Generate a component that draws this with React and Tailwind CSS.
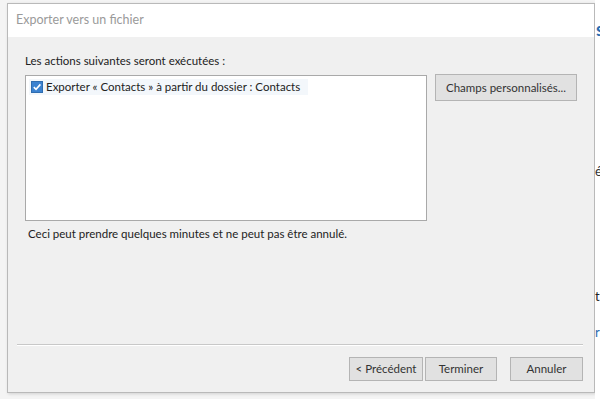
import React from "react";

function Btn({ children, className = "" }) {
  return (
    <div
      className={
        "flex items-center justify-center border border-[#b4b4b4] bg-[#e1e1e1] text-[11.5px] text-[#333] " +
        className
      }
    >
      {children}
    </div>
  );
}

export default function App() {
  return (
    <div
      className="relative flex h-[399px] w-[600px] overflow-hidden bg-[#f4f4f4]"
      style={{ fontFamily: 'Lato, "Noto Sans", sans-serif' }}
    >
      <div className="ml-[7px] mt-[3px] flex h-[390px] w-[588px] flex-col border border-[#b9b9b9] bg-[#f0f0f0] shadow-[1px_1px_3px_rgba(0,0,0,0.15)]">
        <div className="flex h-[33px] items-center bg-white pl-[8px] text-[12.5px] text-[#9a9a9a]">
          Exporter vers un fichier
        </div>
        <div className="flex flex-1 flex-col pl-[17px] pr-[11px] pt-[16px]">
          <div className="text-[11.5px] leading-[16px] text-[#222]">
            Les actions suivantes seront exécutées :
          </div>
          <div className="mt-[6px] flex gap-[8px]">
            <div className="h-[146px] w-[402px] border border-[#a9a9a9] bg-white p-[3px]">
              <div className="flex h-[16px] w-[279px] items-center bg-[#f3f7fb] pl-[2px]">
                <div className="flex h-[12px] w-[12px] shrink-0 items-center justify-center border border-[#2f6db0] bg-[#3b82d0]">
                  <svg width="10" height="10" viewBox="0 0 10 10">
                    <path d="M1.8 5.2 L4 7.3 L8.4 2.4" fill="none" stroke="white" strokeWidth="1.6" />
                  </svg>
                </div>
                <span className="ml-[3px] whitespace-nowrap text-[11.5px] leading-[16px] text-[#222]">
                  Exporter « Contacts » à partir du dossier : Contacts
                </span>
              </div>
            </div>
            <Btn className="mt-[-1px] h-[27px] w-[142px]">Champs personnalisés...</Btn>
          </div>
          <div className="mt-[5px] pl-[3px] text-[11.5px] leading-[16px] text-[#222]">
            Ceci peut prendre quelques minutes et ne peut pas être annulé.
          </div>
          <div className="flex-1" />
          <div className="ml-[-8px] h-[2px] border-t border-[#c8c8c8] bg-white" />
          <div className="flex h-[46px] items-center justify-end pb-[1px]">
            <Btn className="h-[24px] w-[74px]">&lt; Précédent</Btn>
            <Btn className="ml-[2px] h-[24px] w-[72px]">Terminer</Btn>
            <Btn className="ml-[13px] h-[24px] w-[73px]">Annuler</Btn>
          </div>
        </div>
      </div>
      <div className="relative flex-1 overflow-hidden bg-white">
        <span className="absolute left-[1px] top-[16px] text-[18px] font-bold text-[#2b6cb0]">s</span>
        <span className="absolute left-[0px] top-[162px] text-[13px] text-[#333]">é</span>
        <span className="absolute left-[0px] top-[287px] text-[13px] text-[#222]">t</span>
        <span className="absolute left-[0px] top-[323px] text-[13px] text-[#2b6cb0]">r</span>
      </div>
    </div>
  );
}
